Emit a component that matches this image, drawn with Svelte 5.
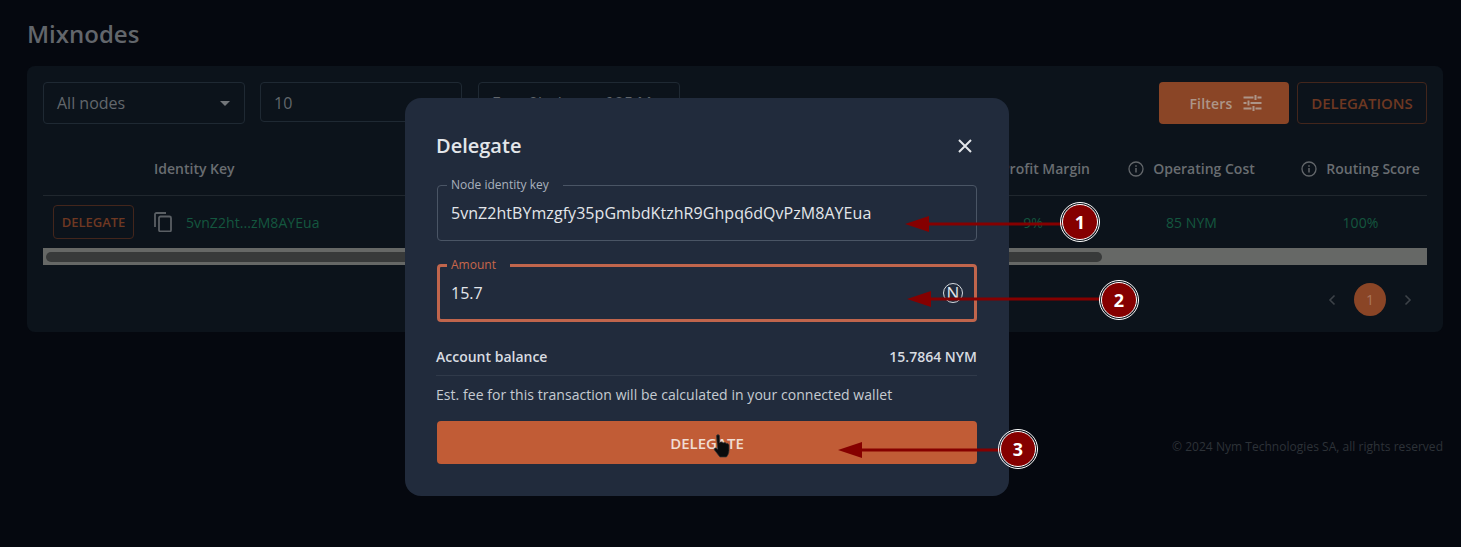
<script>
  const columns = [
    { key: 'margin', label: 'Profit Margin', value: '9%' },
    { key: 'cost', label: 'Operating Cost', value: '85 NYM' },
    { key: 'score', label: 'Routing Score', value: '100%' }
  ];

  const callouts = [
    { n: 1, cx: 1080, cy: 222, x1: 1062, y1: 224, tip: 905, ay: 224 },
    { n: 2, cx: 1119, cy: 300, x1: 1100, y1: 299, tip: 907, ay: 299 },
    { n: 3, cx: 1018, cy: 449, x1: 1000, y1: 450, tip: 838, ay: 450 }
  ];
</script>

<div class="page">
  <h1>Mixnodes</h1>

  <section class="card">
    <div class="toolbar">
      <div class="select first">
        <span>All nodes</span>
        <svg class="caret" width="10" height="5" viewBox="0 0 10 5"><path d="M0 0h10L5 5z" fill="currentColor" /></svg>
      </div>
      <div class="select">10</div>
      <div class="select">Free 2h thrus of 25 M</div>
      <div class="spacer"></div>
      <button class="filters">
        Filters
        <svg width="19" height="16" viewBox="0 0 18 16" fill="none" stroke="currentColor" stroke-width="2">
          <path d="M0 2.500h10M14 2.500h4M12 0v5M0 8h3M7 8h11M5 5.500v5M0 13.500h8M12 13.500h6M10 11v5" />
        </svg>
      </button>
      <button class="outlined big">DELEGATIONS</button>
    </div>

    <div class="head">
      <div class="c-action"></div>
      <div class="c-key">Identity Key</div>
      {#each columns as col}
        <div class="c-num {col.key}">
          <svg class="info" width="16" height="16" viewBox="0 0 16 16" fill="none" stroke="currentColor">
            <circle cx="8" cy="8" r="7" stroke-width="1.300" />
            <path d="M8 7v4.500M8 4.300v1.500" stroke-width="1.500" />
          </svg>
          {col.label}
        </div>
      {/each}
    </div>

    <div class="row">
      <div class="c-action"><button class="outlined">DELEGATE</button></div>
      <div class="c-key">
        <svg class="copy" width="18" height="20" viewBox="0 0 18 20" fill="none" stroke="currentColor" stroke-width="1.800">
          <path d="M12 1H2.500C1.600 1 1 1.600 1 2.500V15" />
          <rect x="5" y="4.500" width="12" height="15" rx="1.500" />
        </svg>
        <span class="link">5vnZ2ht...zM8AYEua</span>
      </div>
      {#each columns as col}
        <div class="c-num {col.key} link">{col.value}</div>
      {/each}
    </div>

    <div class="scrollbar"><div class="thumb"></div></div>

    <div class="pager">
      <svg width="8" height="12" viewBox="0 0 8 12" fill="none" stroke="currentColor" stroke-width="1.600"><path d="M6.500 1.500 2 6l4.500 4.500" /></svg>
      <span class="current">1</span>
      <svg width="8" height="12" viewBox="0 0 8 12" fill="none" stroke="currentColor" stroke-width="1.600"><path d="M1.500 1.500 6 6l-4.500 4.500" /></svg>
    </div>
  </section>

  <footer>© 2024 Nym Technologies SA, all rights reserved</footer>
</div>

<!-- Dialog over the dimmed page -->
<div class="modal">
  <div class="modal-head">
    <h2>Delegate</h2>
    <svg width="14" height="14" viewBox="0 0 14 14" stroke="currentColor" stroke-width="2"><path d="M1 1l12 12M13 1 1 13" /></svg>
  </div>

  <fieldset class="field">
    <legend>Node identity key</legend>
    <span class="key">5vnZ2htBYmzgfy35pGmbdKtzhR9Ghpq6dQvPzM8AYEua</span>
  </fieldset>

  <fieldset class="field active">
    <legend>Amount</legend>
    <span>15.7</span>
    <span class="nym">N</span>
  </fieldset>

  <div class="balance">
    <span>Account balance</span>
    <span>15.7864 NYM</span>
  </div>
  <p class="fee">Est. fee for this transaction will be calculated in your connected wallet</p>
  <button class="submit">DELEGATE</button>
</div>

<!-- Tutorial annotations drawn on top of the screenshot -->
<svg class="notes" width="1461" height="547" viewBox="0 0 1461 547">
  {#each callouts as c}
    <path d="M{c.x1} {c.y1}H{c.tip + 18}" stroke="#850000" stroke-width="3" fill="none" />
    <path d="M{c.tip} {c.ay}l24 -8v16z" fill="#850000" />
    <circle cx={c.cx} cy={c.cy} r="19.500" fill="none" stroke="#fff" stroke-width="1" />
    <circle cx={c.cx} cy={c.cy} r="17.500" fill="#850000" stroke="#fff" stroke-width="1" />
    <text x={c.cx} y={c.cy + 6.500} text-anchor="middle">{c.n}</text>
  {/each}
  <!-- hand cursor -->
  <path
    d="M716.500 436c0-1.800 3-1.800 3 0v6.500c1.500-.8 3-.6 3.600.4 1.200-.6 2.800-.3 3.200.7 1.200-.3 2.700.3 2.700 1.900v5c0 3-1.600 5.500-2.600 6.500h-6.500c-1.500-2-3.500-4.500-5.500-7-1-1.400.8-2.800 2.100-1.700l1.200 1z"
    fill="#0b0b0c"
    stroke="#3a3a3a"
    stroke-width=".7"
  />
</svg>

<style>
  :global(body) {
    margin: 0;
    background: #05080f;
    font-family: "Open Sans", sans-serif;
  }

  h1,
  h2,
  p {
    margin: 0;
  }

  button {
    font: inherit;
    cursor: default;
  }

  .page {
    height: 547px;
    padding: 18px 18px 0 27px;
    box-sizing: border-box;
    overflow: hidden;
  }

  h1 {
    font-size: 24px;
    line-height: 31px;
    font-weight: 600;
    color: #62666b;
  }

  .card {
    height: 266px;
    margin-top: 17px;
    padding: 16px;
    box-sizing: border-box;
    background: #0c131b;
    border-radius: 8px;
  }

  .toolbar {
    display: flex;
    gap: 16px;
    align-items: flex-start;
  }

  .spacer {
    flex: 1;
  }

  .select {
    width: 202px;
    height: 40px;
    padding: 1px 14px 0 13px;
    box-sizing: border-box;
    display: flex;
    align-items: center;
    justify-content: space-between;
    border: 1px solid #1f2933;
    border-radius: 4px;
    font-size: 16px;
    color: #62676c;
  }

  .first {
    height: 42px;
    margin-right: -1px;
    padding-top: 0;
    padding-right: 14px;
  }

  .caret {
    color: #72767a;
  }

  .filters {
    width: 130px;
    height: 42px;
    margin-right: -8px;
    padding: 0 0 0 3px;
    display: flex;
    align-items: center;
    justify-content: center;
    gap: 10px;
    border: 0;
    border-radius: 4px;
    background: #8a4526;
    color: #ad9588;
    font-size: 14px;
    font-weight: 600;
    letter-spacing: 0.2px;
  }

  .outlined {
    height: 34px;
    width: 81px;
    padding: 0;
    border: 1px solid #43261c;
    border-radius: 4px;
    background: transparent;
    color: #6e3822;
    font-size: 13px;
    font-weight: 600;
  }

  .big {
    width: 130px;
    height: 42px;
    font-size: 15px;
  }

  .head,
  .row {
    display: flex;
    align-items: center;
  }

  .head {
    height: 72px;
    padding-top: 18px;
    box-sizing: border-box;
    border-bottom: 1px solid #20272e;
    font-size: 14px;
    font-weight: 600;
    color: #696d71;
  }

  .row {
    height: 52px;
    font-size: 14px;
  }

  .c-action {
    width: 111px;
    padding-left: 10px;
    box-sizing: border-box;
  }

  .c-key {
    flex: 1;
    display: flex;
    align-items: center;
    gap: 14px;
  }

  .copy {
    color: #5a5f64;
  }

  .link {
    color: #14573f;
    letter-spacing: 0.08px;
  }

  .c-num {
    display: flex;
    align-items: center;
    justify-content: center;
    gap: 9px;
  }

  .margin {
    width: 140px;
  }

  .cost {
    width: 173px;
    margin-left: 2px;
  }

  .score {
    width: 133px;
    margin-left: 16px;
  }

  .info {
    color: #63676b;
    flex: none;
  }

  .scrollbar {
    height: 17px;
    padding: 4px 3px;
    box-sizing: border-box;
    background: #666866;
  }

  .thumb {
    width: 1056px;
    height: 10px;
    border-radius: 5px;
    background: #383a3a;
  }

  .pager {
    margin-top: 18px;
    padding-right: 15px;
    display: flex;
    justify-content: flex-end;
    align-items: center;
    gap: 18px;
    color: #3d4248;
  }

  .current {
    width: 32px;
    height: 33px;
    border-radius: 50%;
    display: flex;
    align-items: center;
    justify-content: center;
    background: #8a4526;
    color: #a9775f;
    font-size: 14px;
  }

  footer {
    margin-top: 107px;
    text-align: right;
    font-size: 12px;
    line-height: 16px;
    letter-spacing: 0.03px;
    color: #2d3238;
  }

  .modal {
    position: absolute;
    left: 405px;
    top: 98px;
    width: 604px;
    height: 398px;
    padding: 33px 32px 0 32px;
    box-sizing: border-box;
    background: #212b3c;
    border-radius: 16px;
    color: #e3e6ea;
  }

  .modal-head {
    display: flex;
    align-items: center;
    justify-content: space-between;
    height: 30px;
    padding-right: 5px;
  }

  h2 {
    margin-left: -1px;
    font-size: 20px;
    font-weight: 600;
    line-height: 30px;
  }

  .field {
    position: relative;
    height: 62px;
    margin: 0;
    padding: 0 13px;
    box-sizing: border-box;
    display: block;
    border: 1px solid #4a5565;
    border-radius: 4px;
    font-size: 16px;
    line-height: 44px;
    width: 540px;
  }

  .modal-head + .field {
    margin-top: 18px;
  }

  .key {
    letter-spacing: 0.05px;
  }

  .field legend {
    padding: 0 14px 0 4px;
    margin-left: -4px;
    font-size: 12px;
    line-height: 12px;
    color: #a9b1bc;
  }

  .active {
    height: 63px;
    margin-top: 18px;
    border: 3px solid #c0654c;
    padding: 0 11px;
    line-height: 45px;
  }

  .active legend {
    margin-left: -4px;
    color: #c8674b;
  }

  .nym {
    position: absolute;
    right: 11px;
    top: 12px;
    width: 20px;
    height: 20px;
    box-sizing: border-box;
    border: 1px solid #d7dbe0;
    border-radius: 50%;
    font-size: 17px;
    line-height: 18px;
    text-align: center;
  }

  .balance {
    display: flex;
    justify-content: space-between;
    margin: 25px 0 0 -1px;
    padding-bottom: 9px;
    border-bottom: 1px solid #303a4a;
    font-size: 14px;
    line-height: 19px;
    font-weight: 600;
    color: #d8dce1;
  }

  .fee {
    margin: 9px 0 0 -1px;
    font-size: 14px;
    line-height: 19px;
    letter-spacing: 0.05px;
    color: #c6cbd2;
  }

  .submit {
    display: block;
    width: 540px;
    height: 43px;
    margin-top: 17px;
    padding: 1px 0 0;
    border: 0;
    border-radius: 4px;
    background: #c15c36;
    color: #f0dcd3;
    font-size: 15px;
    font-weight: 600;
  }

  .notes {
    position: absolute;
    left: 0;
    top: 0;
    pointer-events: none;
  }

  .notes text {
    fill: #fff;
    font-family: "Open Sans", sans-serif;
    font-size: 18px;
    font-weight: 700;
  }
</style>
